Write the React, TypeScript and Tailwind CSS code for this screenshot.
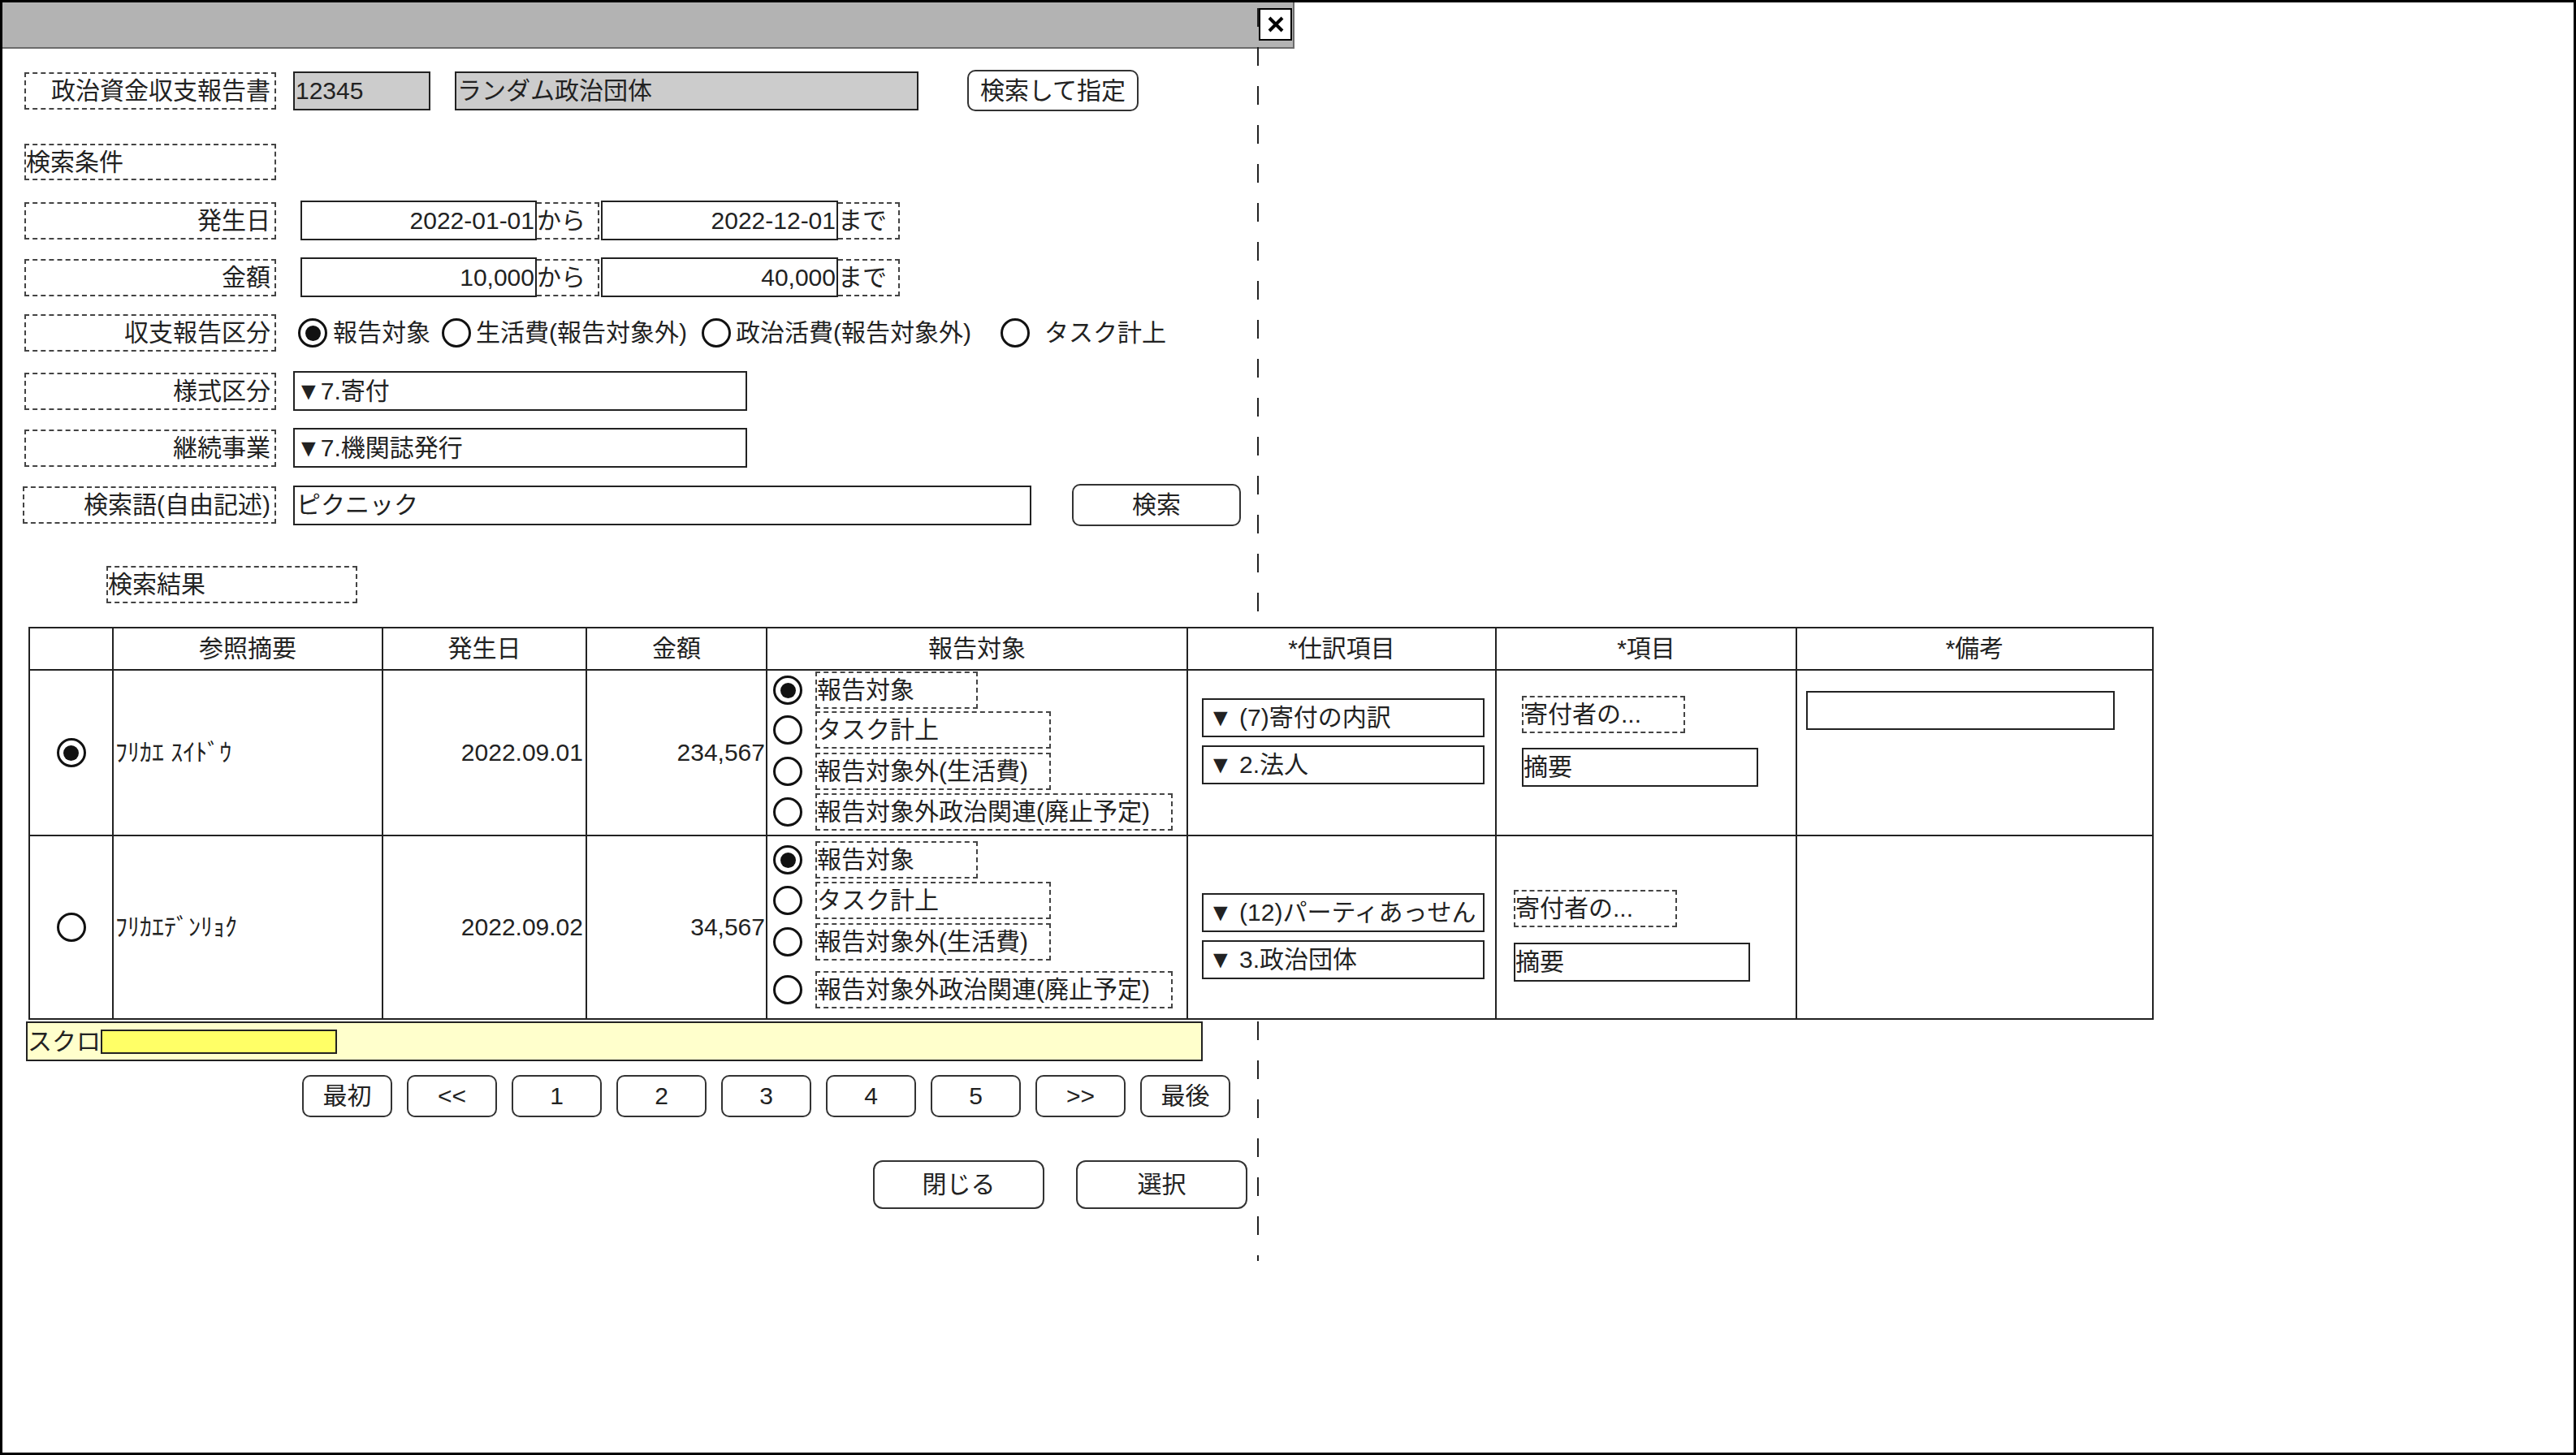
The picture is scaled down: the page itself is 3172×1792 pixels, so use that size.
import type { ReactNode } from "react"

const cell = "border-b-2 border-r-2 border-[#222]"
const dash = "flex items-center whitespace-nowrap border-2 border-dashed border-[#444]"
const solid = "flex items-center whitespace-nowrap border-2 border-[#222]"
const button =
  "flex items-center justify-center whitespace-nowrap rounded-[10px] border-2 border-[#333] bg-white"

function Radio({ on }: { on?: boolean }) {
  return (
    <div className="flex h-[36px] w-[36px] shrink-0 items-center justify-center rounded-full border-[3px] border-[#111] bg-white">
      {on ? <div className="h-[19px] w-[19px] rounded-full bg-[#111]" /> : null}
    </div>
  )
}

function Label({ children }: { children: ReactNode }) {
  return (
    <div className={`${dash} ml-[27px] h-[46px] w-[310px] justify-end pr-[5px]`}>
      {children}
    </div>
  )
}

type Choice = {
  label: string
  box: string
  gap: string
  on?: boolean
}

const rowOneChoices: Choice[] = [
  { label: "報告対象", box: "w-[200px]", gap: "mt-[1px]", on: true },
  { label: "タスク計上", box: "w-[290px]", gap: "mt-[3px]" },
  { label: "報告対象外(生活費)", box: "w-[290px]", gap: "mt-[5px]" },
  { label: "報告対象外政治関連(廃止予定)", box: "w-[440px]", gap: "mt-[4px]" },
]

const rowTwoChoices: Choice[] = [
  { label: "報告対象", box: "w-[200px]", gap: "mt-[6px]", on: true },
  { label: "タスク計上", box: "w-[290px]", gap: "mt-[4px]" },
  { label: "報告対象外(生活費)", box: "w-[290px]", gap: "mt-[5px]" },
  { label: "報告対象外政治関連(廃止予定)", box: "w-[440px]", gap: "mt-[13px]" },
]

function Choices({ items }: { items: Choice[] }) {
  return (
    <div className="flex flex-col pl-[7px]">
      {items.map((item) => (
        <div key={item.label} className={`flex h-[46px] items-center ${item.gap}`}>
          <Radio on={item.on} />
          <div className={`${dash} ml-[16px] h-[46px] ${item.box}`}>{item.label}</div>
        </div>
      ))}
    </div>
  )
}

const headers = ["", "参照摘要", "発生日", "金額", "報告対象", "*仕訳項目", "*項目", "*備考"]
const pages = ["最初", "<<", "1", "2", "3", "4", "5", ">>", "最後"]

export default function App() {
  return (
    <div className="relative h-[1792px] w-[3172px] overflow-hidden border-[3px] border-black bg-white font-['Liberation_Sans','Noto_Sans_CJK_JP',sans-serif] text-[30px] leading-[1.2] text-[#222]">
      <div className="h-[57px] w-[1591px] border-b-2 border-r-2 border-[#6b6b6b] bg-[#b3b3b3]" />

      <div className="absolute left-[1545px] top-[7px] h-[1543px] w-[2px] bg-[repeating-linear-gradient(to_bottom,#222_0px,#222_23px,transparent_23px,transparent_48px)]" />
      <div className="absolute left-[1547px] top-[7px] flex h-[40px] w-[41px] items-center justify-center border-2 border-black bg-white">
        <svg width="20" height="20" viewBox="0 0 20 20">
          <path d="M2 2L18 18M18 2L2 18" stroke="#000" strokeWidth="4" />
        </svg>
      </div>

      <div className="mt-[26px] flex h-[51px] items-center">
        <Label>政治資金収支報告書</Label>
        <div className={`${solid} ml-[21px] h-[48px] w-[169px] bg-[#cccccc] pl-[1px]`}>12345</div>
        <div className={`${solid} ml-[30px] h-[48px] w-[571px] bg-[#cccccc] pl-[1px]`}>ランダム政治団体</div>
        <div className={`${button} ml-[60px] h-[51px] w-[211px]`}>検索して指定</div>
      </div>

      <div className="mt-[40px] flex h-[45px] items-center">
        <div className={`${dash} ml-[27px] h-[45px] w-[310px]`}>検索条件</div>
      </div>

      <div className="mt-[25px] flex h-[49px] items-center">
        <Label>発生日</Label>
        <div className={`${solid} ml-[30px] h-[49px] w-[291px] justify-end pr-[1px]`}>2022-01-01</div>
        <div className={`${dash} h-[46px] w-[77px] border-l-0`}>から</div>
        <div className={`${solid} ml-[2px] h-[49px] w-[292px] justify-end pr-[1px]`}>2022-12-01</div>
        <div className={`${dash} h-[46px] w-[76px] border-l-0`}>まで</div>
      </div>

      <div className="mt-[21px] flex h-[49px] items-center">
        <Label>金額</Label>
        <div className={`${solid} ml-[30px] h-[49px] w-[291px] justify-end pr-[1px]`}>10,000</div>
        <div className={`${dash} h-[46px] w-[77px] border-l-0`}>から</div>
        <div className={`${solid} ml-[2px] h-[49px] w-[292px] justify-end pr-[1px]`}>40,000</div>
        <div className={`${dash} h-[46px] w-[76px] border-l-0`}>まで</div>
      </div>

      <div className="mt-[21px] flex h-[46px] items-center whitespace-nowrap">
        <Label>収支報告区分</Label>
        <div className="ml-[27px]">
          <Radio on />
        </div>
        <span className="ml-[7px]">報告対象</span>
        <div className="ml-[14px]">
          <Radio />
        </div>
        <span className="ml-[6px]">生活費(報告対象外)</span>
        <div className="ml-[18px]">
          <Radio />
        </div>
        <span className="ml-[6px]">政治活費(報告対象外)</span>
        <div className="ml-[36px]">
          <Radio />
        </div>
        <span className="ml-[18px]">タスク計上</span>
      </div>

      <div className="mt-[24px] flex h-[49px] items-center">
        <Label>様式区分</Label>
        <div className={`${solid} ml-[21px] h-[49px] w-[559px] pl-[2px]`}>▼7.寄付</div>
      </div>

      <div className="mt-[21px] flex h-[49px] items-center">
        <Label>継続事業</Label>
        <div className={`${solid} ml-[21px] h-[49px] w-[559px] pl-[2px]`}>▼7.機関誌発行</div>
      </div>

      <div className="mt-[20px] flex h-[52px] items-center">
        <div className={`${dash} ml-[25px] h-[46px] w-[312px] justify-end pr-[5px]`}>検索語(自由記述)</div>
        <div className={`${solid} ml-[21px] h-[49px] w-[909px] pl-[2px]`}>ピクニック</div>
        <div className={`${button} ml-[50px] h-[52px] w-[208px]`}>検索</div>
      </div>

      <div className="mt-[49px] flex h-[46px] items-center">
        <div className={`${dash} ml-[128px] h-[46px] w-[309px]`}>検索結果</div>
      </div>

      <div className="relative z-10 ml-[32px] mt-[29px] grid w-max grid-cols-[103px_332px_251px_222px_518px_380px_370px_439px] grid-rows-[52px_204px_226px] border-l-2 border-t-2 border-[#222] bg-white">
        {headers.map((h, i) => (
          <div key={i} className={`${cell} flex items-center justify-center`}>
            {h}
          </div>
        ))}

        <div className={`${cell} flex items-center justify-center`}>
          <Radio on />
        </div>
        <div className={`${cell} flex items-center pl-[2px]`}>ﾌﾘｶｴ ｽｲﾄﾞｳ</div>
        <div className={`${cell} flex items-center justify-end pr-[3px]`}>2022.09.01</div>
        <div className={`${cell} flex items-center justify-end pr-[1px]`}>234,567</div>
        <div className={cell}>
          <Choices items={rowOneChoices} />
        </div>
        <div className={`${cell} flex flex-col pl-[17px] pt-[34px]`}>
          <div className={`${solid} h-[48px] w-[348px] pl-[6px]`}>▼ (7)寄付の内訳</div>
          <div className={`${solid} mt-[10px] h-[48px] w-[348px] pl-[6px]`}>▼ 2.法人</div>
        </div>
        <div className={`${cell} flex flex-col pl-[31px] pt-[31px]`}>
          <div className={`${dash} h-[46px] w-[201px]`}>寄付者の...</div>
          <div className={`${solid} mt-[18px] h-[48px] w-[291px]`}>摘要</div>
        </div>
        <div className={`${cell} pl-[11px] pt-[25px]`}>
          <div className={`${solid} h-[48px] w-[380px]`} />
        </div>

        <div className={`${cell} flex items-center justify-center`}>
          <Radio />
        </div>
        <div className={`${cell} flex items-center pl-[2px]`}>ﾌﾘｶｴﾃﾞﾝﾘｮｸ</div>
        <div className={`${cell} flex items-center justify-end pr-[3px]`}>2022.09.02</div>
        <div className={`${cell} flex items-center justify-end pr-[1px]`}>34,567</div>
        <div className={cell}>
          <Choices items={rowTwoChoices} />
        </div>
        <div className={`${cell} flex flex-col pl-[17px] pt-[70px]`}>
          <div className={`${solid} h-[48px] w-[348px] pl-[6px]`}>▼ (12)パーティあっせん</div>
          <div className={`${solid} mt-[10px] h-[48px] w-[348px] pl-[6px]`}>▼ 3.政治団体</div>
        </div>
        <div className={`${cell} flex flex-col pl-[21px] pt-[66px]`}>
          <div className={`${dash} h-[46px] w-[201px]`}>寄付者の...</div>
          <div className={`${solid} mt-[19px] h-[48px] w-[291px]`}>摘要</div>
        </div>
        <div className={cell} />
      </div>

      <div className={`${solid} ml-[29px] mt-[2px] h-[49px] w-[1449px] bg-[#ffffcc]`}>
        スクロ
        <div className="h-[30px] w-[291px] border-2 border-[#222] bg-[#ffff66]" />
      </div>

      <div className="ml-[369px] mt-[17px] flex gap-[18px]">
        {pages.map((p) => (
          <div key={p} className={`${button} h-[52px] w-[111px]`}>
            {p}
          </div>
        ))}
      </div>

      <div className="ml-[1072px] mt-[53px] flex gap-[39px]">
        <div className={`${button} h-[60px] w-[211px] rounded-[12px]`}>閉じる</div>
        <div className={`${button} h-[60px] w-[211px] rounded-[12px]`}>選択</div>
      </div>
    </div>
  )
}
